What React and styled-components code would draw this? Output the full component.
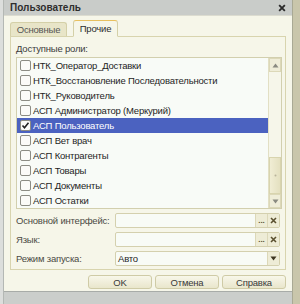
import React from "react"
import styled, { createGlobalStyle } from "styled-components"

const GlobalStyle = createGlobalStyle`
  html, body {
    margin: 0;
    padding: 0;
  }
  body {
    font-family: "Liberation Sans", Arial, sans-serif;
    font-size: 9.5px;
    letter-spacing: -0.2px;
  }
`

const Page = styled.div`
  width: 300px;
  height: 304px;
  background: #cbcecb;
  display: flex;
  overflow: hidden;
`
const LeftStrip = styled.div`
  width: 3px;
  background: #dcdedc;
  border-right: 1px solid #b4b8b4;
`
const RightStrip = styled.div`
  width: 7px;
  background: #c9c6ab;
  border-left: 1px solid #a9a994;
`
const Window = styled.div`
  width: 288px;
  height: 291px;
  display: flex;
  flex-direction: column;
  background: #f6f6e9;
  border-bottom: 1px solid #a8aca8;
`
const TitleBar = styled.div`
  height: 15px;
  background: #c9ccc9;
  display: flex;
  align-items: center;
  justify-content: space-between;
  padding: 0 6px 0 6px;
  border-bottom: 1px solid #dcdcd0;
`
const Title = styled.span`
  font-weight: bold;
  color: #2e2e2e;
  font-size: 10px;
  letter-spacing: 0;
`
const Close = styled.span`
  display: flex;
`
const Body = styled.div`
  padding: 3px 6px 0 6px;
  display: flex;
  flex-direction: column;
`
const TabRow = styled.div`
  display: flex;
  align-items: flex-end;
  gap: 6px;
  height: 17px;
  position: relative;
  z-index: 1;
`
const Tab = styled.div`
  width: ${p => p.$width}px;
  height: ${p => (p.$active ? "17px" : "14px")};
  display: flex;
  align-items: center;
  justify-content: center;
  border: 1px solid #d4d0a8;
  border-bottom: ${p => (p.$active ? "1px solid #f6f6e9" : "none")};
  border-top: 1px solid ${p => (p.$active ? "#e8c060" : "#d4d0a8")};
  border-radius: 3px 3px 0 0;
  background: ${p => (p.$active ? "#f6f6e9" : "#e8e5c8")};
  color: ${p => (p.$active ? "#2c2c2c" : "#555")};
  box-sizing: border-box;
  margin-bottom: ${p => (p.$active ? "-1px" : "0")};
`
const Panel = styled.div`
  width: 276px;
  height: 234px;
  box-sizing: border-box;
  border: 1px solid #d8d4ae;
  padding: 5px 4px 0 5px;
  display: flex;
  flex-direction: column;
`
const Label = styled.div`
  color: #3c3c3c;
  height: 14px;
  line-height: 14px;
  margin-bottom: 1px;
`
const ListBox = styled.div`
  width: 266px;
  height: 152px;
  box-sizing: border-box;
  border: 1px solid #d2cfae;
  background: #f8fbf7;
  display: flex;
`
const Rows = styled.div`
  flex: 1;
  display: flex;
  flex-direction: column;
`
const Row = styled.div`
  height: 15px;
  display: flex;
  align-items: center;
  padding-left: 3px;
  gap: 2px;
  color: ${p => (p.$selected ? "#fff" : "#1e1e1e")};
  background: ${p => (p.$selected ? "#4b62c0" : "transparent")};
  white-space: nowrap;
  overflow: hidden;
`
const Check = styled.span`
  width: 11px;
  height: 11px;
  box-sizing: border-box;
  border: 1px solid #8c8c84;
  border-radius: 2px;
  background: #fbfbf8;
  display: flex;
  align-items: center;
  justify-content: center;
  flex-shrink: 0;
`
const ScrollBar = styled.div`
  width: 12px;
  display: flex;
  flex-direction: column;
  border-left: 1px solid #e2dfc4;
  background: #f6f6ea;
`
const ScrollBtn = styled.div`
  height: 14px;
  display: flex;
  align-items: center;
  justify-content: center;
  background: #efedd8;
  border: 1px solid #dcd8b8;
  box-sizing: border-box;
`
const Track = styled.div`
  flex: 1;
`
const Thumb = styled.div`
  height: 37px;
  box-sizing: border-box;
  border: 1px solid #d8d4ae;
  background: linear-gradient(to right, #f0edd4, #e4e0c0);
  display: flex;
  align-items: center;
  justify-content: center;
`
const Fields = styled.div`
  display: flex;
  flex-direction: column;
  gap: 4px;
  margin-top: 4px;
`
const FieldRow = styled.div`
  display: flex;
  align-items: center;
  height: 15px;
`
const FieldLabel = styled.div`
  width: 99px;
  color: #4a4a44;
  white-space: nowrap;
`
const Input = styled.div`
  width: 165px;
  height: 15px;
  box-sizing: border-box;
  border: 1px solid #d4d0ae;
  border-radius: 2px;
  background: #f8fbf6;
  display: flex;
  align-items: stretch;
  overflow: hidden;
`
const InputText = styled.div`
  flex: 1;
  padding-left: 2px;
  display: flex;
  align-items: center;
  color: #1e1e1e;
`
const InputBtn = styled.div`
  width: 11px;
  border-left: 1px solid #dcd8b8;
  background: #eeecd6;
  display: flex;
  align-items: center;
  justify-content: center;
  color: #5a5030;
  font-weight: bold;
  font-size: ${p => (p.$dots ? "8px" : "10px")};
  line-height: 1;
  letter-spacing: 0;
`
const ButtonRow = styled.div`
  display: flex;
  justify-content: flex-end;
  gap: 3px;
  margin-top: 5px;
`
const Button = styled.div`
  width: 64px;
  height: 14px;
  box-sizing: border-box;
  border: 1px solid #cfcba6;
  border-radius: 3px;
  background: linear-gradient(#f8f7ea, #e9e6cc);
  display: flex;
  align-items: center;
  justify-content: center;
  color: #3a3a3a;
`

const roles = [
  "НТК_Оператор_Доставки",
  "НТК_Восстановление Последовательности",
  "НТК_Руководитель",
  "АСП Администратор (Меркурий)",
  "АСП Пользователь",
  "АСП Вет врач",
  "АСП Контрагенты",
  "АСП Товары",
  "АСП Документы",
  "АСП Остатки",
]

const CheckMark = () => (
  <svg width="9" height="9" viewBox="0 0 9 9">
    <path d="M1.5 4.5 L3.5 6.8 L7.5 1.8" stroke="#202020" strokeWidth="1.6" fill="none" />
  </svg>
)

const Arrow = ({ up }) => (
  <svg width="7" height="5" viewBox="0 0 7 5">
    <path d={up ? "M0.5 4.5 L3.5 0.5 L6.5 4.5 Z" : "M0.5 0.5 L3.5 4.5 L6.5 0.5 Z"} fill="#8a8a80" />
  </svg>
)

const Cross = ({ color = "#5a5030", size = 7 }) => (
  <svg width={size} height={size} viewBox="0 0 7 7">
    <path d="M1 1 L6 6 M6 1 L1 6" stroke={color} strokeWidth="1.6" />
  </svg>
)

const App = () => {
  return (
    <Page>
      <GlobalStyle />
      <LeftStrip />
      <Window>
        <TitleBar>
          <Title>Пользователь</Title>
          <Close>
            <Cross color="#2a2a2a" size={8} />
          </Close>
        </TitleBar>
        <Body>
          <TabRow>
            <Tab $width={57}>Основные</Tab>
            <Tab $width={45} $active>
              Прочие
            </Tab>
          </TabRow>
          <Panel>
            <Label>Доступные роли:</Label>
            <ListBox>
              <Rows>
                {roles.map((r, i) => (
                  <Row key={r} $selected={i === 4}>
                    <Check>{i === 4 && <CheckMark />}</Check>
                    {r}
                  </Row>
                ))}
              </Rows>
              <ScrollBar>
                <ScrollBtn>
                  <Arrow up />
                </ScrollBtn>
                <Track />
                <Thumb>
                  <svg width="3" height="3" viewBox="0 0 3 3">
                    <circle cx="1.5" cy="1.5" r="1" fill="#b8b49a" />
                  </svg>
                </Thumb>
                <ScrollBtn>
                  <Arrow />
                </ScrollBtn>
              </ScrollBar>
            </ListBox>
            <Fields>
              <FieldRow>
                <FieldLabel>Основной интерфейс:</FieldLabel>
                <Input>
                  <InputText />
                  <InputBtn $dots>...</InputBtn>
                  <InputBtn>
                    <Cross />
                  </InputBtn>
                </Input>
              </FieldRow>
              <FieldRow>
                <FieldLabel>Язык:</FieldLabel>
                <Input>
                  <InputText />
                  <InputBtn $dots>...</InputBtn>
                  <InputBtn>
                    <Cross />
                  </InputBtn>
                </Input>
              </FieldRow>
              <FieldRow>
                <FieldLabel>Режим запуска:</FieldLabel>
                <Input>
                  <InputText>Авто</InputText>
                  <InputBtn>
                    <svg width="7" height="5" viewBox="0 0 7 5">
                      <path d="M0.5 0.5 L3.5 4.5 L6.5 0.5 Z" fill="#3c3420" />
                    </svg>
                  </InputBtn>
                </Input>
              </FieldRow>
            </Fields>
          </Panel>
          <ButtonRow>
            <Button>OK</Button>
            <Button>Отмена</Button>
            <Button>Справка</Button>
          </ButtonRow>
        </Body>
      </Window>
      <RightStrip />
    </Page>
  )
}

export default App
